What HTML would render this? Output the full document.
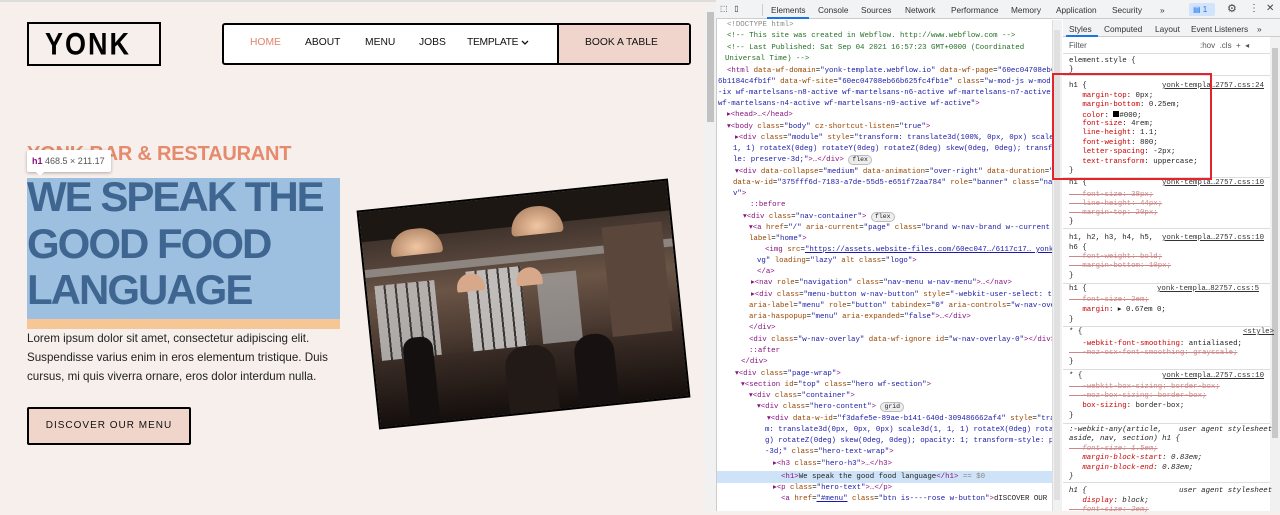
<!DOCTYPE html>
<html><head><style>
*{margin:0;padding:0;box-sizing:border-box}
body{width:1280px;height:511px;overflow:hidden;background:#f7efeb;font-family:"Liberation Sans",sans-serif;position:relative}
.a{position:absolute;white-space:nowrap}
.nav a{position:absolute;top:37px;font-size:10.3px;color:#111}
.dt{font-family:"Liberation Mono",monospace;font-size:7.4px;color:#222}
.e div{position:absolute;white-space:pre;height:11px;line-height:11px}
.t{color:#881280}.n{color:#994500}.v{color:#1a1aa6}.c{color:#236e25}.g{color:#888}
.s div{position:absolute;white-space:pre;line-height:9px;height:9px;left:1069px}
.p{color:#c80000}.x{text-decoration:line-through;color:#c88}
.lk{text-decoration:underline;color:#333}
.sep{position:absolute;left:1063px;width:207px;height:1px;background:#ddd}
.pill{display:inline-block;border:1px solid #bbb;border-radius:6px;background:#eee;padding:0 3px;line-height:8px;font-size:6.5px}
.img div{position:absolute}
</style></head><body>
<div class="a" style="left:0;top:0;width:716px;height:2px;background:#ddd"></div>
<div class="a" style="left:27px;top:22px;width:134px;height:44px;border:2px solid #000"></div>
<div class="a" style="left:45px;top:29px;font-size:27px;font-weight:900;letter-spacing:2px;transform:scaleY(1.15);color:#000">YONK</div>
<div class="nav">
<div class="a" style="left:222px;top:23px;width:469px;height:42px;border:2px solid #000;border-radius:3px;background:#fff"></div>
<div class="a" style="left:557px;top:25px;width:132px;height:38px;background:#efd5cb;border-left:2px solid #000"></div>
<a style="left:250px;color:#e0846a">HOME</a>
<a style="left:305px">ABOUT</a>
<a style="left:365px">MENU</a>
<a style="left:419px">JOBS</a>
<a style="left:467px;letter-spacing:-0.3px">TEMPLATE</a>
<svg class="a" style="left:521px;top:40px" width="8" height="6"><path d="M1 1l3 3 3-3" stroke="#111" stroke-width="1.3" fill="none"/></svg>
<a style="left:585px">BOOK A TABLE</a>
</div>
<div class="a" style="left:27px;top:143px;font-size:20px;font-weight:bold;color:#e58a6c;letter-spacing:-0.2px">YONK BAR &amp; RESTAURANT</div>
<div class="a" style="left:27px;top:178px;width:313px;height:141px;background:#9dbfe0"></div>
<div class="a" style="left:27px;top:319px;width:313px;height:10px;background:#f6c795"></div>
<div class="a" style="left:27px;top:174px;font-size:42px;line-height:46.5px;font-weight:bold;color:#3f6690;letter-spacing:-2px">WE SPEAK THE<br>GOOD FOOD<br>LANGUAGE</div>
<div class="a" style="left:27px;top:150px;width:84px;height:22px;background:#fff;border-radius:2px;box-shadow:0 1px 3px rgba(0,0,0,.3);font-size:9px;line-height:22px;padding-left:5px"><b style="color:#881280">h1</b> <span style="color:#555">468.5 × 211.17</span></div>
<div class="a" style="left:35px;top:171px;width:0;height:0;border:5px solid transparent;border-top-color:#fff"></div>
<div class="a" style="left:27px;top:329px;font-size:11.6px;line-height:19px;color:#222">Lorem ipsum dolor sit amet, consectetur adipiscing elit.<br>Suspendisse varius enim in eros elementum tristique. Duis<br>cursus, mi quis viverra ornare, eros dolor interdum nulla.</div>
<div class="a" style="left:27px;top:407px;width:164px;height:38px;background:#f0d5cb;border:2px solid #000;border-radius:2px;font-size:10px;letter-spacing:1px;text-align:center;line-height:34px;color:#111">DISCOVER OUR MENU</div>
<!-- image -->
<div class="a img" style="left:367px;top:194px;width:313px;height:220px;transform:rotate(-5.9deg);border:2px solid #000;overflow:hidden;background:linear-gradient(180deg,#2b2420 0%,#4a3b33 20%,#6a5446 40%,#4e3d33 60%,#2a1f1a 80%,#181210 100%)">
<div style="left:0;top:0;width:313px;height:30px;background:#1d1714"></div>
<div style="left:0;top:58px;width:313px;height:8px;background:#8c8580"></div>
<div style="left:8px;top:75px;width:60px;height:80px;background:repeating-linear-gradient(90deg,#cfcfcf 0 9px,#333 9px 11px),#ccc;opacity:.75"></div>
<div style="left:100px;top:70px;width:55px;height:90px;background:repeating-linear-gradient(90deg,#d7d7d7 0 9px,#333 9px 11px);opacity:.8"></div>
<div style="left:170px;top:80px;width:40px;height:70px;background:#a8a8a8;opacity:.7"></div>
<div style="left:240px;top:40px;width:60px;height:110px;background:#5a463b"></div>
<div style="left:28px;top:22px;width:52px;height:26px;border-radius:26px 26px 4px 4px;background:radial-gradient(ellipse at 50% 70%,#f0c6a3,#a27658)"></div>
<div style="left:150px;top:12px;width:52px;height:28px;border-radius:26px 26px 4px 4px;background:radial-gradient(ellipse at 50% 70%,#f0c6a3,#a27658)"></div>
<div style="left:90px;top:72px;width:28px;height:18px;border-radius:14px 14px 2px 2px;background:#d8a88a"></div>
<div style="left:150px;top:72px;width:26px;height:18px;border-radius:14px 14px 2px 2px;background:#d8a88a"></div>
<div style="left:0;top:150px;width:313px;height:70px;background:linear-gradient(180deg,#3a2c26,#120d0b)"></div>
<div style="left:30px;top:130px;width:30px;height:90px;background:#141010;border-radius:12px 12px 0 0"></div>
<div style="left:130px;top:150px;width:50px;height:70px;background:#221a17;border-radius:20px 20px 0 0"></div>
<div style="left:200px;top:145px;width:40px;height:75px;background:#171111;border-radius:18px 18px 0 0"></div>
</div>
<div class="a" style="left:705px;top:8px;width:11px;height:503px;background:#f1f1f1"></div>
<div class="a" style="left:707px;top:12px;width:7px;height:110px;background:#c1c1c1"></div>
<!-- devtools -->
<div class="a dt" style="left:716px;top:0;width:564px;height:511px;background:#fff;border-left:1px solid #ccc"></div>
<div class="a" style="left:716px;top:0;width:564px;height:19px;background:#f1f3f4;border-bottom:1px solid #ccc"></div>
<div class="a dt" style="left:720px;top:4px;font-size:8px;font-family:'Liberation Sans',sans-serif;color:#333;white-space:pre">⬚   ▯</div>
<div class="a" style="left:762px;top:4px;width:1px;height:12px;background:#ccc"></div>
<div class="a" style="font-family:'Liberation Sans',sans-serif;font-size:8.3px;color:#333;top:5px;left:0;width:1280px;height:12px">
<span class="a" style="left:771px">Elements</span><span class="a" style="left:818px">Console</span><span class="a" style="left:861px">Sources</span><span class="a" style="left:905px">Network</span><span class="a" style="left:951px">Performance</span><span class="a" style="left:1011px">Memory</span><span class="a" style="left:1056px">Application</span><span class="a" style="left:1112px">Security</span><span class="a" style="left:1160px">»</span>
</div>
<div class="a" style="left:767px;top:17px;width:42px;height:2px;background:#1a73e8"></div>
<div class="a" style="left:1189px;top:3px;width:26px;height:13px;background:#d2e3fc;border-radius:2px;font-size:8px;color:#1a73e8;line-height:13px;padding-left:4px">▤ 1</div>
<div class="a" style="left:1227px;top:2px;font-size:11px;color:#444">⚙</div>
<div class="a" style="left:1249px;top:3px;font-size:10px;color:#444">⋮</div>
<div class="a" style="left:1266px;top:3px;font-size:10px;color:#444">✕</div>
<div class="a" style="left:717px;top:471px;width:336px;height:12px;background:#cfe3f8"></div>
<div class="e dt">
<div style="top:20px;left:727px" class="g">&lt;!DOCTYPE html&gt;</div>
<div style="top:31px;left:727px" class="c">&lt;!-- This site was created in Webflow. http://www.webflow.com --&gt;</div>
<div style="top:43px;left:727px" class="c">&lt;!-- Last Published: Sat Sep 04 2021 16:57:23 GMT+0000 (Coordinated</div>
<div style="top:54px;left:725px" class="c">Universal Time) --&gt;</div>
<div style="top:66px;left:727px"><span class="t">&lt;html</span> <span class="n">data-wf-domain</span>=<span class="v">"yonk-template.webflow.io"</span> <span class="n">data-wf-page</span>=<span class="v">"60ec04708eb6</span></div>
<div style="top:77px;left:718px"><span class="v">6b1184c4fb1f"</span> <span class="n">data-wf-site</span>=<span class="v">"60ec04708eb66b625fc4fb1e"</span> <span class="n">class</span>=<span class="v">"w-mod-js w-mod</span></div>
<div style="top:88px;left:718px" class="v">-ix wf-martelsans-n8-active wf-martelsans-n6-active wf-martelsans-n7-active</div>
<div style="top:99px;left:718px"><span class="v">wf-martelsans-n4-active wf-martelsans-n9-active wf-active"</span><span class="t">&gt;</span></div>
<div style="top:110px;left:727px" class="t">▸&lt;head&gt;…&lt;/head&gt;</div>
<div style="top:122px;left:727px"><span class="t">▾&lt;body</span> <span class="n">class</span>=<span class="v">"body"</span> <span class="n">cz-shortcut-listen</span>=<span class="v">"true"</span><span class="t">&gt;</span></div>
<div style="top:133px;left:735px"><span class="t">▸&lt;div</span> <span class="n">class</span>=<span class="v">"module"</span> <span class="n">style</span>=<span class="v">"transform: translate3d(100%, 0px, 0px) scale</span></div>
<div style="top:144px;left:733px" class="v">1, 1) rotateX(0deg) rotateY(0deg) rotateZ(0deg) skew(0deg, 0deg); transf</div>
<div style="top:155px;left:733px"><span class="v">le: preserve-3d;"</span><span class="t">&gt;…&lt;/div&gt;</span> <span class="pill">flex</span></div>
<div style="top:167px;left:735px"><span class="t">▾&lt;div</span> <span class="n">data-collapse</span>=<span class="v">"medium"</span> <span class="n">data-animation</span>=<span class="v">"over-right"</span> <span class="n">data-duration</span>=<span class="v">"</span></div>
<div style="top:178px;left:733px"><span class="n">data-w-id</span>=<span class="v">"375fff6d-7183-a7de-55d5-e651f72aa784"</span> <span class="n">role</span>=<span class="v">"banner"</span> <span class="n">class</span>=<span class="v">"na</span></div>
<div style="top:189px;left:733px"><span class="v">v"</span><span class="t">&gt;</span></div>
<div style="top:200px;left:750px" class="t">::before</div>
<div style="top:212px;left:743px"><span class="t">▾&lt;div</span> <span class="n">class</span>=<span class="v">"nav-container"</span><span class="t">&gt;</span> <span class="pill">flex</span></div>
<div style="top:223px;left:749px"><span class="t">▾&lt;a</span> <span class="n">href</span>=<span class="v">"/"</span> <span class="n">aria-current</span>=<span class="v">"page"</span> <span class="n">class</span>=<span class="v">"brand w-nav-brand w--current</span></div>
<div style="top:234px;left:749px"><span class="n">label</span>=<span class="v">"home"</span><span class="t">&gt;</span></div>
<div style="top:245px;left:765px"><span class="t">&lt;img</span> <span class="n">src</span>=<span class="v" style="text-decoration:underline">"https://assets.website-files.com/60ec047…/6117c17… yonk</span></div>
<div style="top:256px;left:757px"><span class="v">vg"</span> <span class="n">loading</span>=<span class="v">"lazy"</span> <span class="n">alt class</span>=<span class="v">"logo"</span><span class="t">&gt;</span></div>
<div style="top:267px;left:757px" class="t">&lt;/a&gt;</div>
<div style="top:278px;left:751px"><span class="t">▸&lt;nav</span> <span class="n">role</span>=<span class="v">"navigation"</span> <span class="n">class</span>=<span class="v">"nav-menu w-nav-menu"</span><span class="t">&gt;…&lt;/nav&gt;</span></div>
<div style="top:290px;left:751px"><span class="t">▸&lt;div</span> <span class="n">class</span>=<span class="v">"menu-button w-nav-button"</span> <span class="n">style</span>=<span class="v">"-webkit-user-select: t</span></div>
<div style="top:301px;left:749px"><span class="n">aria-label</span>=<span class="v">"menu"</span> <span class="n">role</span>=<span class="v">"button"</span> <span class="n">tabindex</span>=<span class="v">"0"</span> <span class="n">aria-controls</span>=<span class="v">"w-nav-ove</span></div>
<div style="top:312px;left:749px"><span class="n">aria-haspopup</span>=<span class="v">"menu"</span> <span class="n">aria-expanded</span>=<span class="v">"false"</span><span class="t">&gt;…&lt;/div&gt;</span></div>
<div style="top:323px;left:749px" class="t">&lt;/div&gt;</div>
<div style="top:335px;left:749px"><span class="t">&lt;div</span> <span class="n">class</span>=<span class="v">"w-nav-overlay"</span> <span class="n">data-wf-ignore id</span>=<span class="v">"w-nav-overlay-0"</span><span class="t">&gt;&lt;/div&gt;</span></div>
<div style="top:346px;left:749px" class="t">::after</div>
<div style="top:357px;left:741px" class="t">&lt;/div&gt;</div>
<div style="top:369px;left:735px"><span class="t">▾&lt;div</span> <span class="n">class</span>=<span class="v">"page-wrap"</span><span class="t">&gt;</span></div>
<div style="top:380px;left:741px"><span class="t">▾&lt;section</span> <span class="n">id</span>=<span class="v">"top"</span> <span class="n">class</span>=<span class="v">"hero wf-section"</span><span class="t">&gt;</span></div>
<div style="top:391px;left:749px"><span class="t">▾&lt;div</span> <span class="n">class</span>=<span class="v">"container"</span><span class="t">&gt;</span></div>
<div style="top:402px;left:757px"><span class="t">▾&lt;div</span> <span class="n">class</span>=<span class="v">"hero-content"</span><span class="t">&gt;</span> <span class="pill">grid</span></div>
<div style="top:414px;left:767px"><span class="t">▾&lt;div</span> <span class="n">data-w-id</span>=<span class="v">"f3dafe5e-89ae-b141-640d-309486662af4"</span> <span class="n">style</span>=<span class="v">"tra</span></div>
<div style="top:425px;left:765px" class="v">m: translate3d(0px, 0px, 0px) scale3d(1, 1, 1) rotateX(0deg) rota</div>
<div style="top:436px;left:765px" class="v">g) rotateZ(0deg) skew(0deg, 0deg); opacity: 1; transform-style: p</div>
<div style="top:447px;left:765px"><span class="v">-3d;"</span> <span class="n">class</span>=<span class="v">"hero-text-wrap"</span><span class="t">&gt;</span></div>
<div style="top:459px;left:773px"><span class="t">▸&lt;h3</span> <span class="n">class</span>=<span class="v">"hero-h3"</span><span class="t">&gt;…&lt;/h3&gt;</span></div>
<div style="top:472px;left:781px"><span class="t">&lt;h1&gt;</span>We speak the good food language<span class="t">&lt;/h1&gt;</span> <span class="g">== $0</span></div>
<div style="top:483px;left:773px"><span class="t">▸&lt;p</span> <span class="n">class</span>=<span class="v">"hero-text"</span><span class="t">&gt;…&lt;/p&gt;</span></div>
<div style="top:494px;left:781px"><span class="t">&lt;a</span> <span class="n">href</span>=<span class="v" style="text-decoration:underline">"#menu"</span> <span class="n">class</span>=<span class="v">"btn is----rose w-button"</span><span class="t">&gt;</span>dISCOVER OUR M</div>
</div>
<div class="a" style="left:1052px;top:20px;width:10px;height:491px;background:#f1f1f1;border-left:1px solid #ddd"></div>
<div class="a" style="left:1054px;top:30px;width:6px;height:470px;background:#e0e0e0"></div>
<div class="a" style="left:1063px;top:19px;width:217px;height:18px;background:#f1f3f4;border-bottom:1px solid #ccc"></div>
<div class="a" style="font-family:'Liberation Sans',sans-serif;font-size:8.3px;color:#333;top:24px;left:0">
<span class="a" style="left:1069px">Styles</span><span class="a" style="left:1104px">Computed</span><span class="a" style="left:1155px">Layout</span><span class="a" style="left:1191px">Event Listeners</span><span class="a" style="left:1257px">»</span></div>
<div class="a" style="left:1066px;top:35px;width:32px;height:2px;background:#1a73e8"></div>
<div class="a" style="left:1066px;top:39px;width:197px;height:14px;background:#fff;font-size:8px;color:#555;line-height:14px;padding-left:3px">Filter<span style="position:absolute;left:134px">:hov&nbsp;&nbsp;.cls&nbsp;&nbsp;+&nbsp;&nbsp;◂</span></div>
<div class="a" style="left:1063px;top:53px;width:207px;height:1px;background:#ddd"></div>
<div class="a" style="left:1270px;top:37px;width:10px;height:474px;background:#f1f1f1"></div>
<div class="a" style="left:1272px;top:48px;width:6px;height:390px;background:#c8c8c8"></div>
<div class="sep" style="top:75px"></div><div class="sep" style="top:177px"></div><div class="sep" style="top:228px"></div><div class="sep" style="top:283px"></div><div class="sep" style="top:326px"></div><div class="sep" style="top:369px"></div><div class="sep" style="top:423px"></div><div class="sep" style="top:482px"></div>
<div class="s dt">
<div style="top:57px">element.style {</div><div style="top:66px">}</div>
<div style="top:82px">h1 {<span class="lk" style="position:absolute;left:93px">yonk-templa…2757.css:24</span></div>
<div style="top:92px">   <span class="p">margin-top</span>: 0px;</div>
<div style="top:101px">   <span class="p">margin-bottom</span>: 0.25em;</div>
<div style="top:111px">   <span class="p">color</span>: <span style="display:inline-block;width:6px;height:6px;background:#000"></span>#000;</div>
<div style="top:120px">   <span class="p">font-size</span>: 4rem;</div>
<div style="top:129px">   <span class="p">line-height</span>: 1.1;</div>
<div style="top:139px">   <span class="p">font-weight</span>: 800;</div>
<div style="top:148px">   <span class="p">letter-spacing</span>: -2px;</div>
<div style="top:158px">   <span class="p">text-transform</span>: uppercase;</div>
<div style="top:167px">}</div>
<div style="top:179px">h1 {<span class="lk" style="position:absolute;left:93px">yonk-templa…2757.css:10</span></div>
<div style="top:191px" class="x">   font-size: 38px;</div>
<div style="top:200px" class="x">   line-height: 44px;</div>
<div style="top:209px" class="x">   margin-top: 20px;</div>
<div style="top:218px">}</div>
<div style="top:234px">h1, h2, h3, h4, h5,<span class="lk" style="position:absolute;left:93px">yonk-templa…2757.css:10</span></div>
<div style="top:244px">h6 {</div>
<div style="top:253px" class="x">   font-weight: bold;</div>
<div style="top:262px" class="x">   margin-bottom: 10px;</div>
<div style="top:272px">}</div>
<div style="top:285px">h1 {<span class="lk" style="position:absolute;left:88px">yonk-templa…82757.css:5</span></div>
<div style="top:296px" class="x">   font-size: 2em;</div>
<div style="top:306px">   <span class="p">margin</span>: ▸ 0.67em 0;</div>
<div style="top:316px">}</div>
<div style="top:328px">* {<span class="lk" style="position:absolute;left:174px">&lt;style&gt;</span></div>
<div style="top:340px">   <span class="p">-webkit-font-smoothing</span>: antialiased;</div>
<div style="top:349px" class="x">   -moz-osx-font-smoothing: grayscale;</div>
<div style="top:358px">}</div>
<div style="top:372px">* {<span class="lk" style="position:absolute;left:93px">yonk-templa…2757.css:10</span></div>
<div style="top:383px" class="x">   -webkit-box-sizing: border-box;</div>
<div style="top:392px" class="x">   -moz-box-sizing: border-box;</div>
<div style="top:402px">   <span class="p">box-sizing</span>: border-box;</div>
<div style="top:412px">}</div>
<div style="top:426px;font-style:italic">:-webkit-any(article,<span style="position:absolute;left:110px">user agent stylesheet</span></div>
<div style="top:435px;font-style:italic">aside, nav, section) h1 {</div>
<div style="top:445px;font-style:italic" class="x">   font-size: 1.5em;</div>
<div style="top:454px;font-style:italic">   <span class="p">margin-block-start</span>: 0.83em;</div>
<div style="top:464px;font-style:italic">   <span class="p">margin-block-end</span>: 0.83em;</div>
<div style="top:473px;font-style:italic">}</div>
<div style="top:487px;font-style:italic">h1 {<span style="position:absolute;left:110px">user agent stylesheet</span></div>
<div style="top:497px;font-style:italic">   <span class="p">display</span>: block;</div>
<div style="top:506px;font-style:italic" class="x">   font-size: 2em;</div>
</div>
<div class="a" style="left:1052px;top:73px;width:160px;height:107px;border:2px solid #e3242b"></div>
</body></html>
